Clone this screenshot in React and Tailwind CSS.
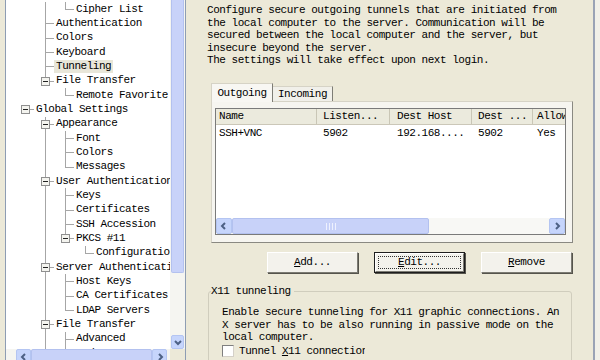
import React from "react";

const FONT = "font-['Liberation_Mono',monospace] text-[11px] tracking-[-0.47px] text-black";
const LINE = "border-[#a6a6a6]";

const tree = [
  { t: "Cipher List", g: [false, true], last: true },
  { t: "Authentication", g: [false] },
  { t: "Colors", g: [false] },
  { t: "Keyboard", g: [false] },
  { t: "Tunneling", g: [false], sel: true },
  { t: "File Transfer", g: [false], box: true, last: true },
  { t: "Remote Favorite", g: [false, false], last: true },
  { t: "Global Settings", g: [], box: true, root: true },
  { t: "Appearance", g: [false], box: true },
  { t: "Font", g: [false, true] },
  { t: "Colors", g: [false, true] },
  { t: "Messages", g: [false, true], last: true },
  { t: "User Authentication", g: [false], box: true },
  { t: "Keys", g: [false, true] },
  { t: "Certificates", g: [false, true] },
  { t: "SSH Accession", g: [false, true] },
  { t: "PKCS #11", g: [false, true], box: true, last: true },
  { t: "Configuration", g: [false, true, false], last: true },
  { t: "Server Authentication", g: [false], box: true },
  { t: "Host Keys", g: [false, true] },
  { t: "CA Certificates", g: [false, true] },
  { t: "LDAP Servers", g: [false, true], last: true },
  { t: "File Transfer", g: [false], box: true },
  { t: "Advanced", g: [false, true] },
  { t: "Modes", g: [false, true] },
];

function TreeRow({ r }) {
  return (
    <div className="flex h-[14.33px] items-center whitespace-nowrap">
      {r.g.map((on, i) => (
        <div key={i} className="relative h-full w-[20px] shrink-0">
          {on && <div className={`absolute bottom-0 left-[9px] top-0 border-l ${LINE}`} />}
        </div>
      ))}
      <div className="relative h-full w-[20px] shrink-0">
        {!r.root && (
          <div className={`absolute left-[9px] top-0 border-l ${LINE} ${r.last ? "h-[7px]" : "bottom-0"}`} />
        )}
        <div className={`absolute left-[9px] right-[2px] top-[7px] border-t ${LINE}`} />
        {r.box && (
          <div className="absolute left-[5px] top-[3px] flex h-[9px] w-[9px] items-center justify-center border border-[#8f8f8f] bg-[#f4f4ef]">
            <div className="h-px w-[5px] bg-[#222]" />
          </div>
        )}
      </div>
      <span className={`-ml-[2px] px-[2px] leading-[13px] ${r.sel ? "bg-[#e8e6d9]" : ""}`}>{r.t}</span>
    </div>
  );
}

function Chevron({ dir }) {
  const d = {
    left: "M6 2 L3 5 L6 8",
    right: "M4 2 L7 5 L4 8",
    down: "M2 4 L5 7 L8 4",
  }[dir];
  return (
    <svg width="10" height="10" viewBox="0 0 10 10">
      <path d={d} fill="none" stroke="#4d6185" strokeWidth="2" />
    </svg>
  );
}

function SBtn({ dir, className }) {
  return (
    <div className={`flex shrink-0 items-center justify-center rounded-[2px] border border-[#b4c5f2] bg-[#c6d5fc] ${className}`}>
      <Chevron dir={dir} />
    </div>
  );
}

const cols = [
  { h: "Name", v: "SSH+VNC", w: "w-[101px]", p: "pl-[3px]" },
  { h: "Listen...", v: "5902", w: "w-[73px]", p: "pl-[6px]" },
  { h: "Dest Host", v: "192.168....", w: "w-[82px]", p: "pl-[7px]" },
  { h: "Dest ...", v: "5902", w: "w-[61px]", p: "pl-[6px]" },
  { h: "Allow Remote", v: "Yes", w: "w-[60px]", p: "pl-[4px]" },
];

function U({ children }) {
  return <span className="underline underline-offset-[1px]">{children}</span>;
}

function Btn({ children }) {
  return (
    <div className="flex h-[21px] w-[91px] items-center justify-center border border-b-[#7c7b73] border-l-white border-r-[#7c7b73] border-t-white bg-[#f3f2ec] shadow-[1px_1px_0_#55544c]">
      {children}
    </div>
  );
}

export default function App() {
  return (
    <div className={`flex h-[360px] w-[600px] overflow-hidden bg-[#ece9d8] ${FONT}`}>
      {/* Left tree */}
      <div className="h-[364px] w-[187px] shrink-0 pl-[5px]">
        <div className="flex h-full w-[181px] flex-col border-x border-[#8e9db3] bg-white">
          <div className="flex min-h-0 flex-1">
            <div className="w-[164px] overflow-hidden pl-[10px] pt-[2px]">
              {tree.map((r, i) => (
                <TreeRow key={i} r={r} />
              ))}
            </div>
            <div className="flex w-[15px] shrink-0 flex-col bg-[#f5f5f1]">
              <div className="mx-[1px] h-[273px] rounded-b-[2px] border border-t-0 border-[#b3c1ef] bg-[#c8d2f9]" />
              <div className="flex-1" />
              <SBtn dir="down" className="mx-[1px] h-[14px]" />
            </div>
          </div>
          <div className="flex h-[15px] shrink-0">
            <div className="flex w-[164px] bg-[#f5f5f1] pl-[10px]">
              <SBtn dir="left" className="h-[15px] w-[15px]" />
              <div className="w-[121px] rounded-[2px] border border-[#b3c1ef] bg-[#c8d2f9]" />
              <SBtn dir="right" className="h-[15px] w-[15px]" />
            </div>
            <div className="w-[15px] bg-[#ece9d8]" />
          </div>
        </div>
      </div>

      {/* Right panel */}
      <div className="flex h-full flex-1">
        <div className="h-full w-[406px] shrink-0 pt-[4px]">
          <div className="whitespace-pre pl-[20px] leading-[12.5px]">
            {"Configure secure outgoing tunnels that are initiated from\nthe local computer to the server. Communication will be\nsecured between the local computer and the server, but\ninsecure beyond the server.\nThe settings will take effect upon next login."}
          </div>

          {/* Tabs */}
          <div className="ml-[24px] mt-[16.5px] w-[362px]">
            <div className="flex h-[18px] items-end">
              <div className="relative z-10 -mb-px flex h-[19px] w-[62px] items-center justify-center border-l border-r border-t border-l-[#d6d3c6] border-r-[#7e7d76] border-t-[#d6d3c6] bg-[#f8f7f3]">
                Outgoing
              </div>
              <div className="flex h-[15px] w-[60px] items-center justify-center border-r border-t border-r-[#7e7d76] border-t-[#d6d3c6] bg-[#f1f0ea]">
                Incoming
              </div>
            </div>
            <div className="h-[142px] border border-b-[#8a8982] border-l-[#d6d3c6] border-r-[#8a8982] border-t-[#d6d3c6] bg-[#f6f5f0] pl-[3px] pt-[6px]">
              <div className="flex h-[127px] w-[351px] flex-col border border-[#7a7a7a] bg-white">
                <div className="flex h-[16px] shrink-0 overflow-hidden border-b border-[#cbc7b8] bg-[#ebeadd]">
                  {cols.map((c, i) => (
                    <div key={i} className={`flex shrink-0 items-center overflow-hidden whitespace-nowrap border-r border-[#c9c6b6] ${c.w} ${c.p}`}>
                      {c.h}
                    </div>
                  ))}
                </div>
                <div className="flex h-[17px] shrink-0 overflow-hidden">
                  {cols.map((c, i) => (
                    <div key={i} className={`flex shrink-0 items-center whitespace-nowrap ${c.w} ${c.p}`}>
                      {c.v}
                    </div>
                  ))}
                </div>
                <div className="flex-1" />
                <div className="flex h-[16px] shrink-0 bg-[#f8f8f5]">
                  <SBtn dir="left" className="h-[16px] w-[16px]" />
                  <div className="flex w-[197px] items-center justify-center gap-[2px] rounded-[2px] border border-[#b3c1ef] bg-[#c8d2f9]">
                    <div className="h-[7px] w-px bg-[#eef1fe]" />
                    <div className="h-[7px] w-px bg-[#eef1fe]" />
                    <div className="h-[7px] w-px bg-[#eef1fe]" />
                    <div className="h-[7px] w-px bg-[#eef1fe]" />
                  </div>
                  <div className="flex-1" />
                  <SBtn dir="right" className="h-[16px] w-[16px]" />
                </div>
              </div>
            </div>
          </div>

          {/* Buttons */}
          <div className="ml-[80px] mt-[9px] flex gap-[16px]">
            <Btn>
              <span><U>A</U>dd...</span>
            </Btn>
            <div className="flex h-[21px] w-[91px] border border-[#1d1d1d] shadow-[1px_1px_0_#55544c]">
              <div className="flex flex-1 border border-b-[#7c7b73] border-l-white border-r-[#7c7b73] border-t-white bg-[#f3f2ec] p-[2px]">
                <div className="flex flex-1 items-center justify-center border border-dotted border-[#333]">
                  <span><U>E</U>dit...</span>
                </div>
              </div>
            </div>
            <Btn>
              <span><U>R</U>emove</span>
            </Btn>
          </div>

          {/* Group box */}
          <div className="relative ml-[21px] mt-[18px] h-[90px] w-[364px] rounded-[3px] border border-[#d0cdbd] pl-[13px] pt-[14px]">
            <div className="absolute -top-[7px] left-[2px] bg-[#ece9d8] pr-[3px] leading-[13px]">X11 tunneling</div>
            <div className="whitespace-pre leading-[12.5px]">
              {"Enable secure tunneling for X11 graphic connections. An\nX server has to be also running in passive mode on the\nlocal computer."}
            </div>
            <div className="mt-[1.5px] flex h-[12px] items-center gap-[5px]">
              <div className="h-[12px] w-[12px] shrink-0 border border-b-[#d4d0c8] border-l-[#7f7f7f] border-r-[#d4d0c8] border-t-[#7f7f7f] bg-white" />
              <div className="w-[126px] overflow-hidden whitespace-nowrap">
                Tunnel <U>X</U>11 connections
              </div>
            </div>
          </div>
        </div>
        <div className="w-[2px] shrink-0 bg-[#9aa3b5]" />
        <div className="flex-1 bg-[#f1f0e8]" />
      </div>
    </div>
  );
}
